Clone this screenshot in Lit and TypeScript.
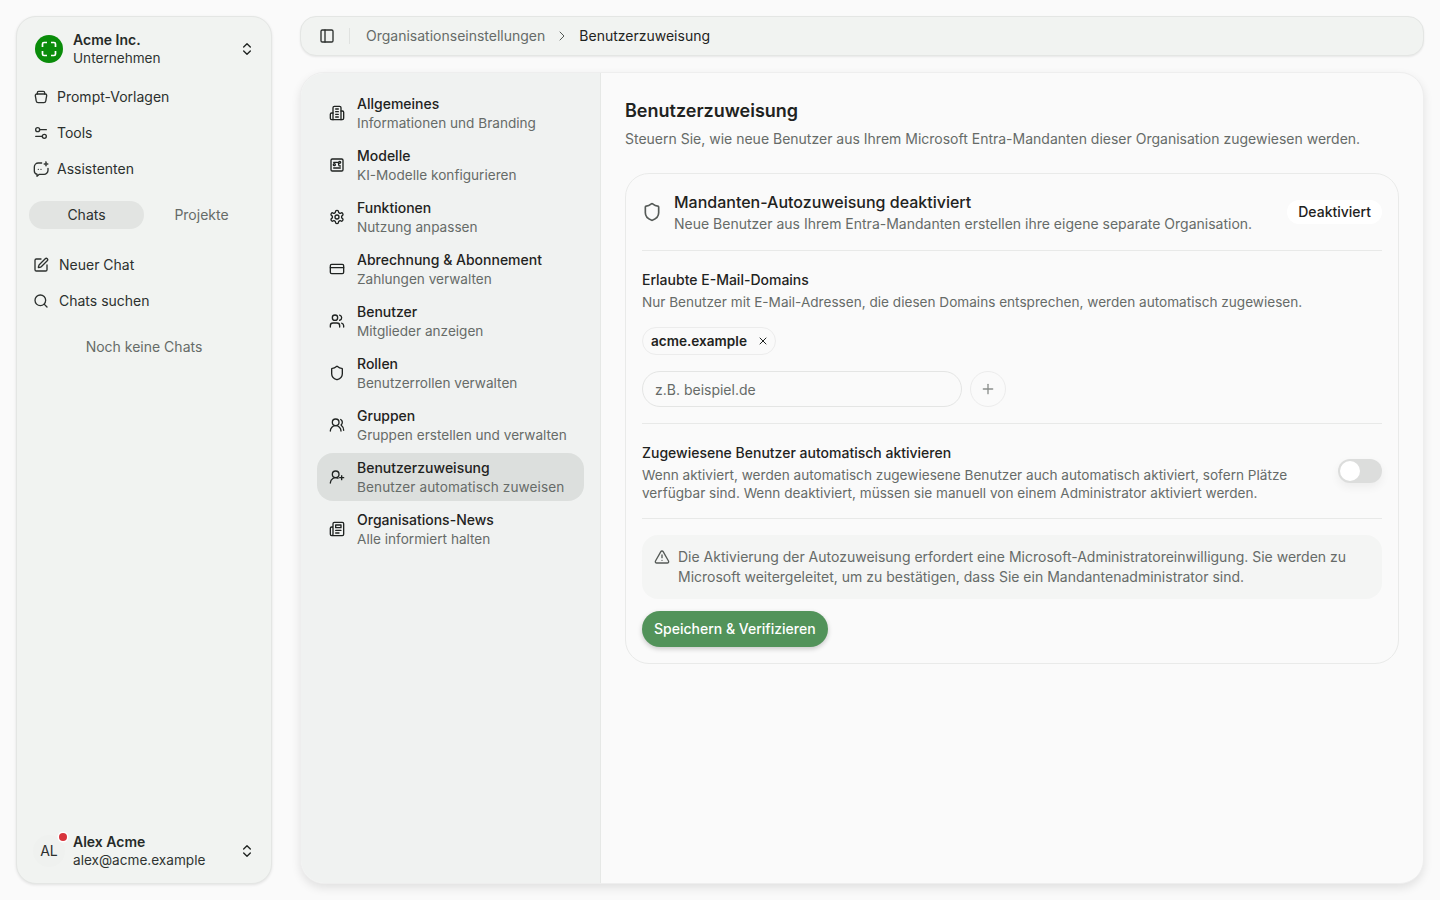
import { LitElement, html, css, svg } from 'lit';
import { customElement } from 'lit/decorators.js';

const icon = (body: unknown, size = 16, sw = 2) => html`
  <svg class="ico" width=${size} height=${size} viewBox="0 0 24 24" fill="none" stroke="currentColor"
    stroke-width=${sw} stroke-linecap="round" stroke-linejoin="round">${body}</svg>`;

const I = {
  jar: svg`<path d="M6.500 7.500v-2a2 2 0 0 1 2-2h7a2 2 0 0 1 2 2v2"/><path d="M5.500 7.500h13a2 2 0 0 1 2 2c0 2-.5 3-.8 5l-.5 3.500a3 3 0 0 1-3 2.500H7.800a3 3 0 0 1-3-2.500l-.5-3.500c-.3-2-.8-3-.8-5a2 2 0 0 1 2-2Z"/>`,
  tools: svg`<path d="M14 17H4"/><path d="M20 7h-9"/><circle cx="17" cy="17" r="3"/><circle cx="7" cy="7" r="3"/>`,
  assistant: svg`<path d="M13 3H8a6 6 0 0 0-6 6v6a5 5 0 0 0 4 4.900V23l3.500-3H16a6 6 0 0 0 6.500-6v-3"/><path d="M19.500 1l.9 2.600 2.600.9-2.600.9-.9 2.600-.9-2.600-2.600-.9 2.600-.9Z" fill="currentColor" stroke-width="1"/><path d="M8 12.500h.01M12 12.500h.01"/>`,
  edit: svg`<path d="M12 3H5a2 2 0 0 0-2 2v14a2 2 0 0 0 2 2h14a2 2 0 0 0 2-2v-7"/><path d="M18.375 2.625a1 1 0 0 1 3 3l-9.013 9.014a2 2 0 0 1-.853.505l-2.873.84a.5.5 0 0 1-.62-.62l.84-2.873a2 2 0 0 1 .506-.852z"/>`,
  search: svg`<circle cx="11" cy="11" r="8"/><path d="m21 21-4.300-4.300"/>`,
  updown: svg`<path d="m7 15 5 5 5-5"/><path d="m7 9 5-5 5 5"/>`,
  panel: svg`<rect x="3" y="3" width="18" height="18" rx="2"/><path d="M9 3v18"/>`,
  right: svg`<path d="m9 18 6-6-6-6"/>`,
  building: svg`<path d="M6 22V4a2 2 0 0 1 2-2h8a2 2 0 0 1 2 2v18Z"/><path d="M6 12H4a2 2 0 0 0-2 2v6a2 2 0 0 0 2 2h2"/><path d="M18 9h2a2 2 0 0 1 2 2v9a2 2 0 0 1-2 2h-2"/><path d="M10 6h4"/><path d="M10 10h4"/><path d="M10 14h4"/><path d="M10 18h4"/>`,
  model: svg`<rect x="3" y="3" width="18" height="18" rx="2"/><path d="M7 8h5.500a2 2 0 0 1 2 2v1.500a2 2 0 0 0 2 2H17"/><path d="M7 16.500h10"/><circle cx="8" cy="11.500" r="1.500"/><circle cx="16" cy="8" r="1.500"/>`,
  gear: svg`<path d="M12.220 2h-.44a2 2 0 0 0-2 2v.18a2 2 0 0 1-1 1.730l-.43.25a2 2 0 0 1-2 0l-.15-.08a2 2 0 0 0-2.730.73l-.22.38a2 2 0 0 0 .73 2.730l.15.1a2 2 0 0 1 1 1.720v.51a2 2 0 0 1-1 1.740l-.15.09a2 2 0 0 0-.73 2.730l.22.38a2 2 0 0 0 2.730.73l.15-.08a2 2 0 0 1 2 0l.43.25a2 2 0 0 1 1 1.730V20a2 2 0 0 0 2 2h.44a2 2 0 0 0 2-2v-.18a2 2 0 0 1 1-1.730l.43-.25a2 2 0 0 1 2 0l.15.08a2 2 0 0 0 2.730-.73l.22-.39a2 2 0 0 0-.73-2.730l-.15-.08a2 2 0 0 1-1-1.740v-.5a2 2 0 0 1 1-1.740l.15-.09a2 2 0 0 0 .73-2.730l-.22-.38a2 2 0 0 0-2.730-.73l-.15.08a2 2 0 0 1-2 0l-.43-.25a2 2 0 0 1-1-1.730V4a2 2 0 0 0-2-2z"/><circle cx="12" cy="12" r="3"/>`,
  card: svg`<rect x="2" y="5" width="20" height="14" rx="2"/><path d="M2 10h20"/>`,
  users: svg`<path d="M16 21v-2a4 4 0 0 0-4-4H6a4 4 0 0 0-4 4v2"/><circle cx="9" cy="7" r="4"/><path d="M22 21v-2a4 4 0 0 0-3-3.870"/><path d="M16 3.130a4 4 0 0 1 0 7.750"/>`,
  shield: svg`<path d="M20 13c0 5-3.500 7.500-7.660 8.950a1 1 0 0 1-.670-.010C7.500 20.500 4 18 4 13V6a1 1 0 0 1 1-1c2 0 4.500-1.200 6.240-2.720a1.170 1.170 0 0 1 1.520 0C14.510 3.810 17 5 19 5a1 1 0 0 1 1 1z"/>`,
  group: svg`<path d="M18 21a8 8 0 0 0-16 0"/><circle cx="10" cy="8" r="5"/><path d="M22 20c0-3.370-2-6.500-4-8a5 5 0 0 0-.450-8.300"/>`,
  userplus: svg`<path d="M2 21a8 8 0 0 1 11.500-7.200"/><circle cx="10" cy="8" r="5"/><path d="M19 10v6"/><path d="M22 13h-6"/>`,
  news: svg`<path d="M4 22h16a2 2 0 0 0 2-2V4a2 2 0 0 0-2-2H8a2 2 0 0 0-2 2v16a2 2 0 0 1-2 2Zm0 0a2 2 0 0 1-2-2v-9c0-1.100.9-2 2-2h2"/><path d="M18 14h-8"/><path d="M15 18h-5"/><path d="M10 6h8v4h-8V6Z"/>`,
  x: svg`<path d="M18 6 6 18"/><path d="m6 6 12 12"/>`,
  plus: svg`<path d="M5 12h14"/><path d="M12 5v14"/>`,
  warn: svg`<path d="m21.730 18-8-14a2 2 0 0 0-3.480 0l-8 14A2 2 0 0 0 4 21h16a2 2 0 0 0 1.730-3"/><path d="M12 9v4"/><path d="M12 17h.01"/>`,
};

const NAV = [
  ['Allgemeines', 'Informationen und Branding', I.building],
  ['Modelle', 'KI-Modelle konfigurieren', I.model],
  ['Funktionen', 'Nutzung anpassen', I.gear],
  ['Abrechnung & Abonnement', 'Zahlungen verwalten', I.card],
  ['Benutzer', 'Mitglieder anzeigen', I.users],
  ['Rollen', 'Benutzerrollen verwalten', I.shield],
  ['Gruppen', 'Gruppen erstellen und verwalten', I.group],
  ['Benutzerzuweisung', 'Benutzer automatisch zuweisen', I.userplus],
  ['Organisations-News', 'Alle informiert halten', I.news],
] as const;

@customElement('app-root')
export class AppRoot extends LitElement {
  static styles = css`
    :host {
      display: flex;
      gap: 28px;
      height: 900px;
      box-sizing: border-box;
      padding: 16px;
      background: #fafafa;
      color: #1f2321;
      font: 14px/18px Inter, 'Liberation Sans', sans-serif;
      overflow: hidden;
    }
    * { box-sizing: border-box; }
    .ico { flex: none; display: block; }

    .sidebar {
      width: 256px;
      flex: none;
      display: flex;
      flex-direction: column;
      padding: 12px;
      background: #f1f3f1;
      border: 1px solid #e4e6e4;
      border-radius: 20px;
      box-shadow: 0 1px 3px rgba(0, 0, 0, 0.1);
    }
    .account {
      display: flex;
      align-items: center;
      gap: 10px;
      height: 40px;
      padding: 0 4px 0 6px;
      line-height: 18px;
    }
    .account .who { flex: 1; }
    .account .name { font-weight: 600; color: #262a28; }
    .account .sub { font-size: 13.6px; color: #2f3331; }
    .logo { width: 28px; height: 28px; flex: none; }
    .side-links { display: flex; flex-direction: column; margin-top: 10px; margin-bottom: 14px; }
    .side-link {
      display: flex;
      align-items: center;
      gap: 8px;
      height: 36px;
      padding-left: 4px;
      color: #2c302e;
    }
    .side-link.wide { gap: 10px; }
    .tabs { display: flex; }
    .tab {
      width: 115px;
      height: 28px;
      display: flex;
      align-items: center;
      justify-content: center;
      border-radius: 14px;
      color: #666b68;
    }
    .tab.on { background: #e2e4e2; color: #2c302e; }
    .side-links.second { margin-top: 18px; margin-bottom: 0; }
    .empty { text-align: center; color: #666b68; margin-top: 19px; }
    .spacer { flex: 1; }
    .account.foot { gap: 8px; padding-left: 4px; }
    .avatar {
      position: relative;
      width: 32px;
      height: 32px;
      flex: none;
      display: flex;
      align-items: center;
      justify-content: center;
      border-radius: 50%;
      background: #eff1ef;
      color: #2c302e;
    }
    .dot {
      position: absolute;
      top: -2px;
      right: -2px;
      width: 8px;
      height: 8px;
      border-radius: 50%;
      background: #d8343c;
      box-shadow: 0 0 0 1.5px #fff;
    }

    .main { flex: 1; min-width: 0; display: flex; flex-direction: column; gap: 16px; }
    .crumbs {
      height: 40px;
      flex: none;
      display: flex;
      align-items: center;
      padding: 0 18px;
      background: #f1f3f1;
      border: 1px solid #e4e6e4;
      border-radius: 16px;
      box-shadow: 0 1px 2px rgba(0, 0, 0, 0.08);
      color: #666b68;
    }
    .crumbs .panel-ico { color: #2c302e; }
    .crumbs .sep { width: 1px; height: 16px; background: #e0e2e0; margin: 0 16px 0 14px; }
    .crumbs .chev { margin: 0 9px; color: #555a57; }
    .crumbs .cur { color: #1f2321; }

    .panel {
      flex: 1;
      min-height: 0;
      display: flex;
      border-radius: 24px;
      border: 1px solid #eeeeee;
      background: #fafafa;
      box-shadow: 0 4px 10px rgba(0, 0, 0, 0.1);
      overflow: hidden;
    }
    .nav {
      width: 300px;
      flex: none;
      display: flex;
      flex-direction: column;
      gap: 4px;
      padding: 16px;
      background: #f0f2f1;
      border-right: 1px solid #e6e8e6;
    }
    .nav-item {
      display: flex;
      align-items: center;
      gap: 12px;
      height: 48px;
      padding: 0 12px;
      border-radius: 16px;
      line-height: 19px;
    }
    .nav-item.on { background: #dcdfdd; }
    .nav-item .t { font-weight: 500; color: #1f2321; }
    .nav-item .d { font-size: 13.6px; color: #666b68; margin: 1px 0 -1px; }
    .nav-item.on .d { letter-spacing: 0.1px; }

    .content { flex: 1; min-width: 0; padding: 24px; }
    h1 { margin: 2px 0 0; font-size: 18px; line-height: 24px; font-weight: 600; color: #1f2321; }
    .lead { margin: 6px 0 0; line-height: 20px; color: #666b68; }
    .card {
      margin-top: 24px;
      padding: 16px;
      border: 1px solid #e9eae9;
      border-radius: 24px;
    }
    .card-head { display: flex; align-items: center; gap: 12px; padding-bottom: 16px; border-bottom: 1px solid #e8e9e8; }
    .card-head .shield { color: #555a57; }
    .card-head .txt { flex: 1; }
    .card-head .tt { font-size: 16px; line-height: 24px; font-weight: 500; color: #1f2321; }
    .card-head .ds { color: #666b68; line-height: 20px; }
    .badge {
      background: #fff;
      border-radius: 12px;
      height: 24px;
      padding: 0 11px;
      display: flex;
      align-items: center;
      font-weight: 500;
    }
    .block { padding: 18px 0 16px; border-bottom: 1px solid #e8e9e8; }
    .block .tt { font-weight: 500; line-height: 22px; }
    .block .ds { font-size: 13.6px; color: #666b68; line-height: 22px; }
    .chip {
      display: inline-flex;
      align-items: center;
      gap: 10px;
      height: 28px;
      margin-top: 14px;
      padding: 0 6px 0 8px;
      border: 1px solid #ececec;
      border-radius: 14px;
      font-size: 13.6px;
      font-weight: 600;
      color: #1f2321;
      vertical-align: top;
    }
    .add { display: flex; align-items: center; gap: 8px; margin-top: 16px; }
    .input {
      width: 320px;
      height: 36px;
      padding: 1px 12px 0;
      display: flex;
      align-items: center;
      border: 1px solid #e4e5e4;
      border-radius: 18px;
      color: #666b68;
    }
    .round {
      width: 36px;
      height: 36px;
      display: flex;
      align-items: center;
      justify-content: center;
      border: 1px solid #ececec;
      border-radius: 50%;
      color: #8b8f8c;
    }
    .activate { display: flex; align-items: center; gap: 36px; padding-top: 16px; }
    .activate .tt { line-height: 26px; }
    .activate .ds { line-height: 18px; }
    .activate .copy { flex: 1; }
    .switch {
      width: 44px;
      height: 24px;
      flex: none;
      padding: 2px;
      border-radius: 12px;
      background: #dcdddc;
      box-shadow: 0 4px 10px rgba(0, 0, 0, 0.06);
    }
    .switch i { display: block; width: 20px; height: 20px; border-radius: 50%; background: #fff; }
    .notice {
      display: flex;
      gap: 8px;
      margin-top: 16px;
      padding: 12px;
      background: #f4f5f4;
      border-radius: 16px;
      line-height: 20px;
      color: #666b68;
    }
    .notice .ico { margin-top: 2px; color: #555a57; }
    .primary {
      display: inline-flex;
      align-items: center;
      height: 36px;
      margin-top: 12px;
      padding: 0 12px;
      border-radius: 18px;
      background: #52935a;
      color: #fff;
      font-weight: 500;
      box-shadow: 0 2px 5px rgba(0, 0, 0, 0.2);
    }
  `;

  render() {
    return html`
      <aside class="sidebar">
        <div class="account">
          <svg class="logo" viewBox="0 0 28 28" fill="none">
            <circle cx="14" cy="14" r="14" fill="#0a8c0a" />
            <path d="M7.500 12V9A1.500 1.500 0 0 1 9 7.500h3M16 7.500h3A1.500 1.500 0 0 1 20.500 9v3M20.500 16v3a1.500 1.500 0 0 1-1.500 1.500h-3M12 20.500H9A1.500 1.500 0 0 1 7.500 19v-3" stroke="#fff" stroke-width="1.700" />
          </svg>
          <div class="who">
            <div class="name">Acme Inc.</div>
            <div class="sub">Unternehmen</div>
          </div>
          ${icon(I.updown)}
        </div>
        <div class="side-links">
          <div class="side-link">${icon(I.jar)}Prompt-Vorlagen</div>
          <div class="side-link">${icon(I.tools)}Tools</div>
          <div class="side-link">${icon(I.assistant)}Assistenten</div>
        </div>
        <div class="tabs">
          <div class="tab on">Chats</div>
          <div class="tab">Projekte</div>
        </div>
        <div class="side-links second">
          <div class="side-link wide">${icon(I.edit)}Neuer Chat</div>
          <div class="side-link wide">${icon(I.search)}Chats suchen</div>
        </div>
        <div class="empty">Noch keine Chats</div>
        <div class="spacer"></div>
        <div class="account foot">
          <div class="avatar">AL<span class="dot"></span></div>
          <div class="who">
            <div class="name">Alex Acme</div>
            <div class="sub">alex@acme.example</div>
          </div>
          ${icon(I.updown)}
        </div>
      </aside>

      <div class="main">
        <div class="crumbs">
          <span class="panel-ico">${icon(I.panel)}</span>
          <span class="sep"></span>
          <span>Organisationseinstellungen</span>
          <span class="chev">${icon(I.right, 16, 1.5)}</span>
          <span class="cur">Benutzerzuweisung</span>
        </div>

        <div class="panel">
          <nav class="nav">
            ${NAV.map(([t, d, ic], i) => html`
              <div class="nav-item ${i === 7 ? 'on' : ''}">
                ${icon(ic)}
                <div>
                  <div class="t">${t}</div>
                  <div class="d">${d}</div>
                </div>
              </div>`)}
          </nav>

          <section class="content">
            <h1>Benutzerzuweisung</h1>
            <p class="lead">Steuern Sie, wie neue Benutzer aus Ihrem Microsoft Entra-Mandanten dieser Organisation zugewiesen werden.</p>

            <div class="card">
              <div class="card-head">
                <span class="shield">${icon(I.shield, 20, 2)}</span>
                <div class="txt">
                  <div class="tt">Mandanten-Autozuweisung deaktiviert</div>
                  <div class="ds">Neue Benutzer aus Ihrem Entra-Mandanten erstellen ihre eigene separate Organisation.</div>
                </div>
                <div class="badge">Deaktiviert</div>
              </div>

              <div class="block">
                <div class="tt">Erlaubte E-Mail-Domains</div>
                <div class="ds">Nur Benutzer mit E-Mail-Adressen, die diesen Domains entsprechen, werden automatisch zugewiesen.</div>
                <div class="chip">acme.example ${icon(I.x, 12, 2)}</div>
                <div class="add">
                  <div class="input">z.B. beispiel.de</div>
                  <div class="round">${icon(I.plus)}</div>
                </div>
              </div>

              <div class="block activate">
                <div class="copy">
                  <div class="tt">Zugewiesene Benutzer automatisch aktivieren</div>
                  <div class="ds">Wenn aktiviert, werden automatisch zugewiesene Benutzer auch automatisch aktiviert, sofern Plätze verfügbar sind. Wenn deaktiviert, müssen sie manuell von einem Administrator aktiviert werden.</div>
                </div>
                <div class="switch"><i></i></div>
              </div>

              <div class="notice">
                ${icon(I.warn)}
                <div>Die Aktivierung der Autozuweisung erfordert eine Microsoft-Administratoreinwilligung. Sie werden zu Microsoft weitergeleitet, um zu bestätigen, dass Sie ein Mandantenadministrator sind.</div>
              </div>
              <div class="primary">Speichern &amp; Verifizieren</div>
            </div>
          </section>
        </div>
      </div>
    `;
  }
}
